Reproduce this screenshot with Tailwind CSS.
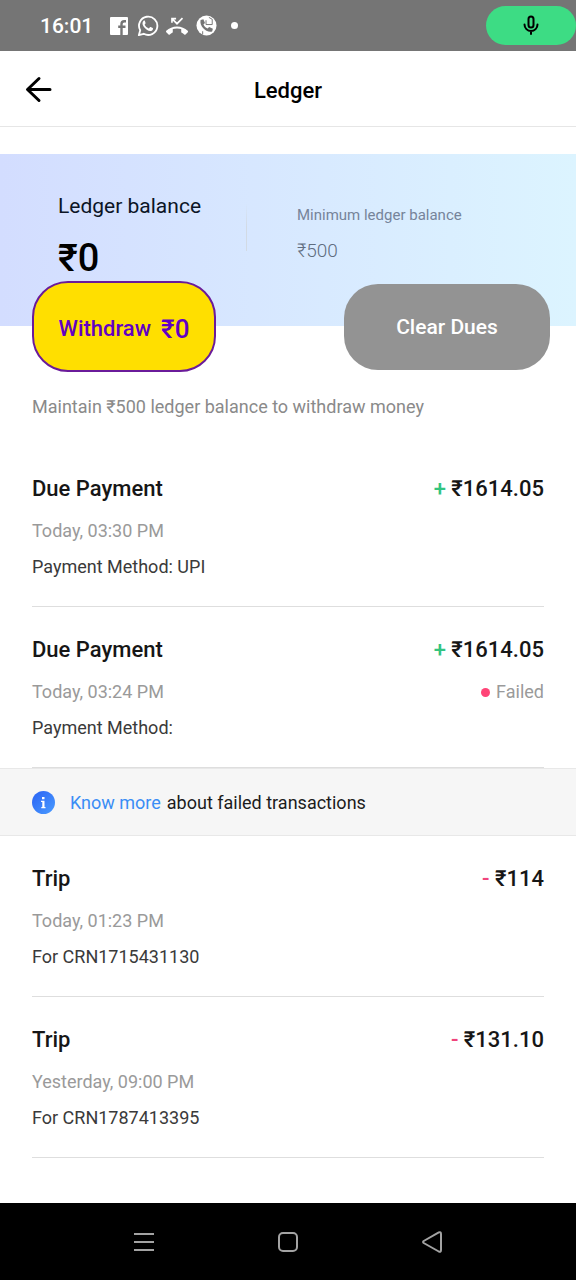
<!DOCTYPE html>
<html lang="en">
<head>
<meta charset="utf-8">
<meta name="viewport" content="width=device-width, initial-scale=1">
<title>Ledger</title>
<script src="https://cdn.jsdelivr.net/npm/@tailwindcss/browser@4"></script>
</head>
<body class="flex min-h-screen flex-col bg-white font-['Roboto','Noto_Sans',sans-serif] text-black">

<!-- Status bar -->
<div class="flex h-[51px] items-center bg-[#757575] pl-10 text-white">
  <span class="text-[21px] leading-7 font-medium">16:01</span>
  <svg class="ml-[17px] size-[18px]" viewBox="0 0 18 18" role="img" aria-label="Facebook"><path fill="currentColor" d="M1 0h16a1 1 0 0 1 1 1v16a1 1 0 0 1-1 1H1a1 1 0 0 1-1-1V1a1 1 0 0 1 1-1z"/><path fill="none" stroke="#757575" stroke-width="2.400" d="M11.500 18V7q0-2.800 2.800-2.800H16M8.200 9.800h7.300"/></svg>
  <svg class="ml-[9px] size-[22px]" viewBox="0 0 24 24" role="img" aria-label="WhatsApp"><path fill="none" stroke="currentColor" stroke-width="2" stroke-linejoin="round" d="M2 22l1.500-5.300A10 10 0 1 1 7.300 20.500z"/><path fill="currentColor" d="M8.700 6.500c-.3-.6-1.300-.5-1.700.1-2.600 3.100.4 7.100 3.700 9.500 2.600 1.900 5.500 2 6.600-.4.300-.8.200-1.300-.1-1.500l-2.300-1.100c-.4-.2-.6-.1-.8.200l-.9 1.100c-.3.300-.5.300-.9.100-1.700-.8-2.800-1.800-3.800-3.500-.2-.3-.1-.5.100-.8l.6-.8c.2-.3.200-.5.100-.8z"/></svg>
  <svg class="ml-[7px] size-[22px]" viewBox="0 0 24 24" role="img" aria-label="Missed call"><path fill="none" stroke="currentColor" stroke-width="1.800" d="M6.500 8.500V4h4.500M6.500 4l5.500 5.500L18 3.500"/><path fill="currentColor" d="M23.700 17.300C20.700 14.400 16.500 12.600 12 12.600S3.300 14.400.3 17.300c-.4.400-.4 1 0 1.400l2.500 2.500c.4.400 1 .4 1.400 0 .8-.7 1.700-1.300 2.700-1.800.3-.2.500-.5.500-.9v-3.100c1.500-.5 3-.7 4.600-.7s3.200.2 4.600.7v3.100c0 .4.200.7.600.9 1 .5 1.900 1.100 2.700 1.800.4.400 1 .4 1.400 0l2.500-2.500c.3-.4.300-1-.1-1.400z"/></svg>
  <svg class="ml-2 size-[21px]" viewBox="0 0 22 22" role="img" aria-label="Call"><circle cx="11" cy="11" r="10.500" fill="currentColor"/><path fill="#757575" d="M4.800 5.300l2.900-.9 1.700 3.900-1.600 1.700c.9 2 2.300 3.300 4.300 4.200l1.700-1.600 3.900 1.700-.8 3c-5.800 1.600-13.600-5.200-12.100-12z"/><path fill="none" stroke="#757575" stroke-width="1" d="M10.500 5.500V10h6.500V4.500l-3.500-2M7 17v3.500"/></svg>
  <span class="ml-[14px] size-[7px] rounded-full bg-white"></span>
  <span class="ml-auto flex h-[39px] w-[90px] items-center justify-center rounded-full bg-[#3ddc84] text-black">
    <svg class="size-[22px]" viewBox="0 0 22 22" fill="none" stroke="currentColor" stroke-width="2" role="img" aria-label="Microphone in use"><rect x="8.500" y="1.500" width="5" height="11" rx="2.500"/><path stroke-linecap="round" d="M4.500 9.500a6.500 6.500 0 0 0 13 0M11 16v3"/></svg>
  </span>
</div>

<!-- Title bar -->
<header class="grid h-[76px] grid-cols-[1fr_auto_1fr] items-center border-b border-[#e6e6e6] px-[25px]">
  <button type="button" aria-label="Back" class="justify-self-start pt-[2px]">
    <svg class="size-[27px]" viewBox="0 0 27 27" fill="none" stroke="currentColor" stroke-width="3"><path stroke-linecap="round" stroke-linejoin="round" d="M25 13.500H3M14 2.500L2.500 13.500 14 24.500"/></svg>
  </button>
  <h1 class="pt-1 text-[22px] leading-8 font-medium">Ledger</h1>
</header>

<main class="flex-1 pb-11">
  <section class="mt-[27px]">
    <div class="flex h-[172px] bg-linear-to-r from-[#d3ddff] to-[#dcf4ff]">
      <div class="w-[246px] shrink-0 pt-9 pl-[58px]">
        <p class="text-[21px] leading-8 text-[#0c1526]">Ledger balance</p>
        <p class="mt-4 text-[38px] leading-10 font-medium">₹0</p>
      </div>
      <div class="mt-[49px] h-12 w-px bg-linear-to-b from-transparent via-[#d2dae4] to-[#d2dae4]"></div>
      <div class="pt-[49px] pl-[50px] text-[#76849a]">
        <p class="text-[15px] leading-6">Minimum ledger balance</p>
        <p class="mt-3 text-[19px] leading-6 font-light text-[#5f6d80]">₹500</p>
      </div>
    </div>
    <div class="-mt-[45px] flex items-center justify-between pr-[26px] pl-8">
      <button type="button" class="flex h-[91px] w-[184px] items-center justify-center gap-[10px] rounded-[36px] border-2 border-[#6a1b9a] bg-[#ffdf00] pt-1 font-medium text-[#6200c4]"><span class="text-[22px] leading-8">Withdraw</span><span class="text-[26px] leading-8">₹0</span></button>
      <button type="button" class="h-[86px] w-[206px] rounded-[34px] bg-[#939393] text-[21px] leading-8 font-medium text-white">Clear Dues</button>
    </div>
    <p class="mt-5 px-8 text-[18px] leading-[30px] text-[#8a8a8a]">Maintain ₹500 ledger balance to withdraw money</p>
  </section>

  <ul class="mt-6 px-8">
    <li class="border-b border-[#dedede] pt-7 pb-6">
      <div class="flex justify-between text-[22px] leading-[30px] font-medium text-[#161616]"><h2>Due Payment</h2><p><span class="text-[#33c47f]">+</span> ₹1614.05</p></div>
      <p class="mt-3 text-[18px] leading-[30px] text-[#9a9a9a]">Today, 03:30 PM</p>
      <p class="mt-[6px] text-[18px] leading-[30px] text-[#3a3a3a]">Payment Method: UPI</p>
    </li>
    <li class="border-b border-[#dedede] pt-7 pb-6">
      <div class="flex justify-between text-[22px] leading-[30px] font-medium text-[#161616]"><h2>Due Payment</h2><p><span class="text-[#33c47f]">+</span> ₹1614.05</p></div>
      <div class="mt-3 flex justify-between text-[18px] leading-[30px] text-[#9a9a9a]"><p>Today, 03:24 PM</p><p class="flex items-center gap-[6px]"><span class="size-[9px] rounded-full bg-[#ff4477]"></span>Failed</p></div>
      <p class="mt-[6px] text-[18px] leading-[30px] text-[#3a3a3a]">Payment Method:</p>
    </li>
  </ul>

  <aside class="flex h-[68px] items-center border-y border-[#e8e8e8] bg-[#f6f6f6] px-8">
    <svg class="size-[23px]" viewBox="0 0 23 23" aria-hidden="true"><defs><linearGradient id="info" x1="0" y1="0" x2="1" y2="1"><stop stop-color="#2a62f4"/><stop offset="1" stop-color="#4a9cff"/></linearGradient></defs><circle cx="11.500" cy="11.500" r="11.500" fill="url(#info)"/><path fill="#fff" d="M10 6h2.500v2.300H10zM9 9.800h3.500v6.200h1v1.300H9.300V16h1v-5H9z"/></svg>
    <p class="ml-[15px] flex gap-[6px] pt-[2px] text-[18px] leading-[30px] text-[#1c1c1c]"><a href="#failed" class="text-[#3a8df5]">Know more</a><span>about failed transactions</span></p>
  </aside>

  <ul class="px-8">
    <li class="border-b border-[#dedede] pt-7 pb-6">
      <div class="flex justify-between text-[22px] leading-[30px] font-medium text-[#161616]"><h2>Trip</h2><p><span class="text-[#f0447c]">-</span> ₹114</p></div>
      <p class="mt-3 text-[18px] leading-[30px] text-[#9a9a9a]">Today, 01:23 PM</p>
      <p class="mt-[6px] text-[18px] leading-[30px] text-[#3a3a3a]">For CRN1715431130</p>
    </li>
    <li class="border-b border-[#dedede] pt-7 pb-6">
      <div class="flex justify-between text-[22px] leading-[30px] font-medium text-[#161616]"><h2>Trip</h2><p><span class="text-[#f0447c]">-</span> ₹131.10</p></div>
      <p class="mt-3 text-[18px] leading-[30px] text-[#9a9a9a]">Yesterday, 09:00 PM</p>
      <p class="mt-[6px] text-[18px] leading-[30px] text-[#3a3a3a]">For CRN1787413395</p>
    </li>
  </ul>
</main>

<!-- System navigation -->
<nav aria-label="System" class="grid h-[77px] grid-cols-3 items-center justify-items-center bg-black px-[72px] text-[#a3a3a3]">
  <button type="button" aria-label="Recent apps"><svg class="size-5" viewBox="0 0 20 20" fill="none" stroke="currentColor" stroke-width="2"><path d="M0 2h20M0 10h20M0 18h20"/></svg></button>
  <button type="button" aria-label="Home"><svg class="size-5" viewBox="0 0 20 20" fill="none" stroke="currentColor" stroke-width="2"><rect x="1" y="1" width="18" height="18" rx="4"/></svg></button>
  <button type="button" aria-label="Back"><svg class="h-[22px] w-5" viewBox="0 0 20 22" fill="none" stroke="currentColor" stroke-width="2" stroke-linejoin="round"><path d="M1.700 10L16.800 1.400Q19 .5 19 3v16q0 2.500-2.200 1.500L1.700 12Q.5 11 1.700 10z"/></svg></button>
</nav>
</body>
</html>
